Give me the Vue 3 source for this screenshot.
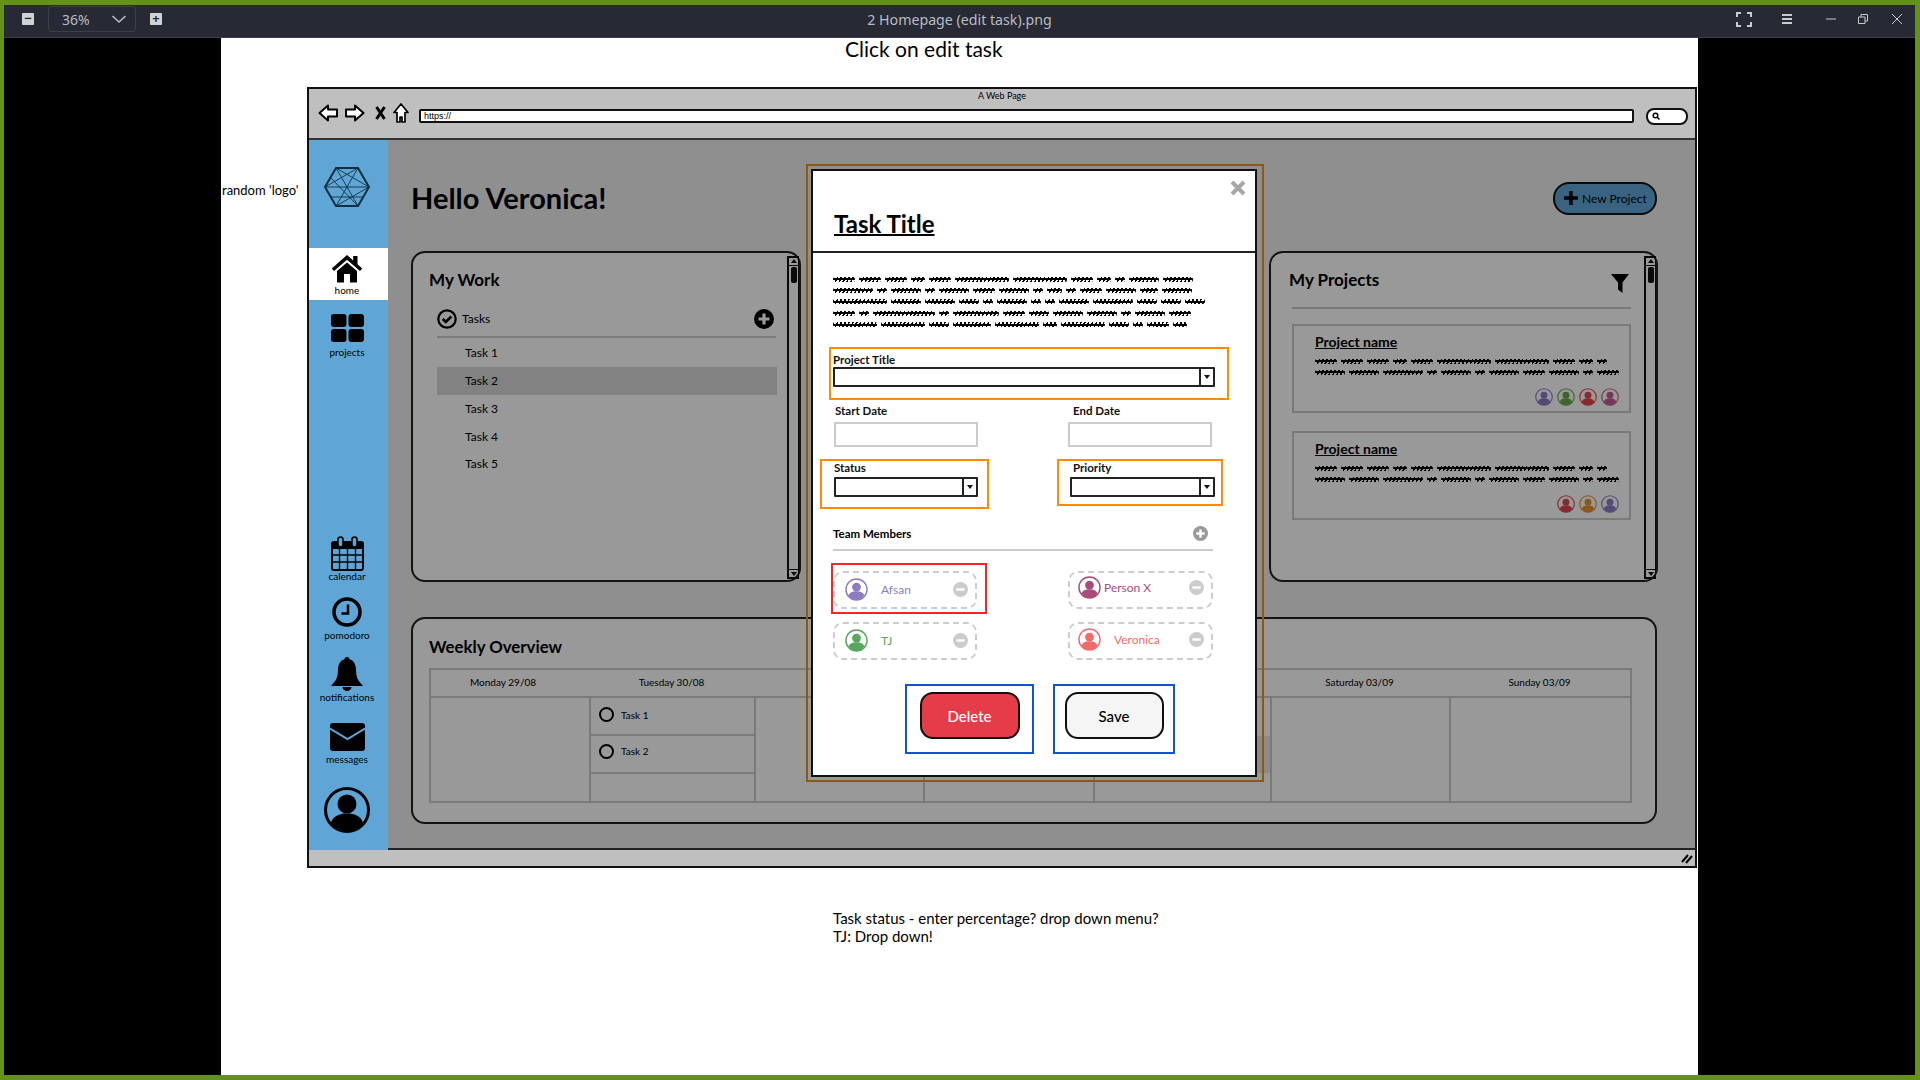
<template>
  <div class="screen">
    <svg class="sprite" aria-hidden="true">
      <symbol id="person" viewBox="0 0 24 24">
        <circle cx="12" cy="12" r="11" fill="none" stroke="currentColor" stroke-width="1.5" />
        <circle cx="12" cy="9.5" r="4.6" fill="currentColor" />
        <path d="M3.8 18.2c1.2-3.4 4-4.4 8.2-4.4s7 1 8.2 4.4A11 11 0 0 1 12 23a11 11 0 0 1-8.2-4.8z" fill="currentColor" />
      </symbol>
      <symbol id="plus-round" viewBox="0 0 20 20">
        <circle cx="10" cy="10" r="10" fill="currentColor" />
        <path d="M10 4.5v11M4.5 10h11" stroke="#fff" stroke-width="3.2" />
      </symbol>
      <symbol id="minus-round" viewBox="0 0 20 20">
        <circle cx="10" cy="10" r="10" fill="currentColor" />
        <path d="M4.5 10h11" stroke="#fff" stroke-width="3.2" />
      </symbol>
    </svg>

    <header class="titlebar">
      <div class="tb-left">
        <span class="tb-btn">−</span>
        <div class="zoom-box">
          <span>36%</span>
          <svg width="16" height="10" viewBox="0 0 16 10"><path d="M1.5 2l6.5 6 6.5-6" fill="none" stroke="#b8bcc4" stroke-width="1.6" /></svg>
        </div>
        <span class="tb-btn">+</span>
      </div>
      <div class="tb-title">2 Homepage (edit task).png</div>
      <div class="tb-right">
        <svg class="ic-full" width="16" height="15" viewBox="0 0 16 15"><path d="M1 5V1h4M11 1h4v4M15 10v4h-4M5 14H1v-4" fill="none" stroke="#c9cbd0" stroke-width="2" /></svg>
        <svg class="ic-menu" width="12" height="12" viewBox="0 0 12 12"><path d="M1 2h10M1 6h10M1 10h10" stroke="#c9cbd0" stroke-width="2" /></svg>
        <svg class="ic-min" width="10" height="10" viewBox="0 0 10 10"><path d="M0 5h10" stroke="#c9cbd0" /></svg>
        <svg class="ic-rest" width="10" height="10" viewBox="0 0 10 10"><path d="M.5 3h6.500v6.500H.5zM3 3V.5h6.500V7H7" fill="none" stroke="#c9cbd0" /></svg>
        <svg class="ic-close" width="10" height="10" viewBox="0 0 10 10"><path d="M0 0l10 10M10 0L0 10" stroke="#c9cbd0" /></svg>
      </div>
    </header>

    <div class="viewer">
      <div class="page">
        <div class="caption">Click on edit task</div>
        <div class="side-note">random 'logo'</div>

        <div class="mock">
          <div class="topbar">
            <div class="web-title">A Web Page</div>
            <div class="url-row">
              <svg class="nav-ic" width="20" height="20" viewBox="0 0 20 20"><path d="M1.500 10L10 2.500V6.500H19V13.500H10V17.500z" fill="#fff" stroke="#000" stroke-width="2" stroke-linejoin="round" /></svg>
              <svg class="nav-ic fwd" width="20" height="20" viewBox="0 0 20 20"><path d="M18.500 10L10 2.500V6.500H1V13.500H10V17.500z" fill="#fff" stroke="#000" stroke-width="2" stroke-linejoin="round" /></svg>
              <svg class="nav-ic cross" width="11" height="14" viewBox="0 0 11 14"><path d="M1.500 1l8 12M9.500 1l-8 12" stroke="#000" stroke-width="3" /></svg>
              <svg class="nav-ic house" width="16" height="20" viewBox="0 0 16 20"><path d="M8 1L1 9.500H4V19H7V14H9V19H12V9.500H15z" fill="#fff" stroke="#000" stroke-width="1.700" stroke-linejoin="round" /></svg>
              <div class="url">https://</div>
              <div class="search-pill">
                <svg width="8" height="8" viewBox="0 0 8 8"><circle cx="3.500" cy="3.500" r="2.300" fill="none" stroke="#000" stroke-width="1.500" /><path d="M5 5l2.500 2.500" stroke="#000" stroke-width="1.500" /></svg>
              </div>
            </div>
          </div>

          <div class="body">
            <aside class="sidebar">
              <svg class="logo" width="46" height="40" viewBox="0 0 46 40">
                <path d="M12 1h22l11 19-11 19H12L1 20z" fill="none" stroke="#10303f" stroke-width="2" />
                <path d="M12 1l22 38M34 1L12 39M1 20l33-19M1 20h44M6 30h34M12 1l33 19M45 20L12 39M6 10l28 29" fill="none" stroke="#10303f" stroke-width=".9" />
              </svg>

              <div class="nav-item active">
                <svg width="32" height="32" viewBox="0 0 32 32">
                  <path d="M16 2L.8 15.500l2.200 2.500L16 6.800 29 18l2.200-2.500L26.500 11.300V3h-4.300v4.500z" />
                  <path d="M16 9.500L6 18v11.500h7V21h6v8.500h7V18z" />
                </svg>
                <span>home</span>
              </div>

              <div class="nav-item projects">
                <svg width="33" height="28" viewBox="0 0 33 28">
                  <rect x="0" y="0" width="15.500" height="13" rx="3" />
                  <rect x="17.500" y="0" width="15.500" height="13" rx="3" />
                  <rect x="0" y="15" width="15.500" height="13" rx="3" />
                  <rect x="17.500" y="15" width="15.500" height="13" rx="3" />
                </svg>
                <span>projects</span>
              </div>

              <div class="nav-item calendar">
                <svg width="33" height="35" viewBox="0 0 33 35">
                  <rect x="1" y="6" width="31" height="28" rx="2" fill="none" stroke="#000" stroke-width="2" />
                  <rect x="1" y="6" width="31" height="7" />
                  <path d="M1 19h31M1 26h31M8.500 13v21M16.500 13v21M24.500 13v21" stroke="#000" stroke-width="1.400" />
                  <rect x="7" y="1" width="5" height="10" rx="2.500" fill="#5fa6d6" stroke="#000" stroke-width="1.500" />
                  <rect x="21" y="1" width="5" height="10" rx="2.500" fill="#5fa6d6" stroke="#000" stroke-width="1.500" />
                </svg>
                <span>calendar</span>
              </div>

              <div class="nav-item pomodoro">
                <svg width="30" height="30" viewBox="0 0 30 30">
                  <circle cx="15" cy="15" r="13" fill="none" stroke="#000" stroke-width="3.500" />
                  <path d="M16 7.500V16.500H9.500" fill="none" stroke="#000" stroke-width="2.500" />
                </svg>
                <span>pomodoro</span>
              </div>

              <div class="nav-item bell">
                <svg width="32" height="34" viewBox="0 0 32 34">
                  <circle cx="16" cy="2.500" r="2.500" />
                  <path d="M16 2c-6 0-9 4.500-9 11 0 6-1.500 10-4.500 13L0 29h32l-2.500-3c-3-3-4.500-7-4.500-13 0-6.500-3-11-9-11z" />
                  <path d="M11.500 30a4.500 4 0 0 0 9 0z" />
                </svg>
                <span>notifications</span>
              </div>

              <div class="nav-item messages">
                <svg width="35" height="28" viewBox="0 0 35 28">
                  <rect width="35" height="28" rx="3" />
                  <path d="M0 5.500L17.500 16 35 5.500" fill="none" stroke="#5fa6d6" stroke-width="2" />
                </svg>
                <span>messages</span>
              </div>

              <svg class="profile" width="46" height="46" viewBox="0 0 46 46">
                <circle cx="23" cy="23" r="21.500" fill="none" stroke="#000" stroke-width="3" />
                <circle cx="23" cy="17" r="9.500" />
                <path d="M7 36c2-7 8-9.500 16-9.500s14 2.500 16 9.500a21 21 0 0 1-16 8 21 21 0 0 1-16-8z" />
              </svg>
            </aside>

            <main class="main">
              <div class="hello-row">
                <h1>Hello Veronica!</h1>
                <div class="new-project">
                  <svg width="14" height="14" viewBox="0 0 14 14"><path d="M7 0v14M0 7h14" stroke="#000" stroke-width="3.400" /></svg>
                  <span>New Project</span>
                </div>
              </div>

              <div class="cards-row">
                <section class="card work-card">
                  <h2>My Work</h2>
                  <div class="tasks-head">
                    <svg width="20" height="20" viewBox="0 0 20 20">
                      <circle cx="10" cy="10" r="8.700" fill="none" stroke="#000" stroke-width="2.200" />
                      <path d="M5.800 10l3 3 5.500-5.500" fill="none" stroke="#000" stroke-width="2.600" />
                    </svg>
                    <span>Tasks</span>
                    <svg class="add" width="20" height="20"><use href="#plus-round" /></svg>
                  </div>
                  <div class="task-list">
                    <div v-for="t in tasks" :key="t" class="task-row" :class="{ selected: t === 'Task 2' }">{{ t }}</div>
                  </div>
                  <div class="scrollbar">
                    <i class="sb-up"></i>
                    <b class="sb-thumb"></b>
                    <i class="sb-down"></i>
                  </div>
                </section>

                <section class="card projects-card">
                  <div class="proj-head">
                    <h2>My Projects</h2>
                    <svg class="filter" width="18" height="19" viewBox="0 0 18 19"><path d="M0 0h18L11.500 8.500V19L7 15.500V8.500z" /></svg>
                  </div>
                  <div v-for="(p, i) in projects" :key="i" class="project">
                    <div class="project-name">Project name</div>
                    <div v-for="(line, j) in p.lines" :key="j" class="scribble">
                      <i v-for="(w, k) in line" :key="k" :style="{ width: w + 'px' }"></i>
                    </div>
                    <div class="project-team">
                      <svg v-for="(c, k) in p.team" :key="k" width="18" height="18" :style="{ color: c }"><use href="#person" /></svg>
                    </div>
                  </div>
                  <div class="scrollbar">
                    <i class="sb-up"></i>
                    <b class="sb-thumb"></b>
                    <i class="sb-down"></i>
                  </div>
                </section>
              </div>

              <section class="card week-card">
                <h2>Weekly Overview</h2>
                <div class="week">
                  <div class="week-head">
                    <div v-for="d in days" :key="d.name" :class="d.cls">{{ d.name }}</div>
                  </div>
                  <div class="week-body">
                    <div v-for="d in days" :key="d.name" class="day">
                      <div v-for="t in d.tasks" :key="t" class="slot">
                        <span class="radio"></span>{{ t }}
                      </div>
                      <div v-if="d.mark" class="slot-mark"></div>
                    </div>
                  </div>
                </div>
              </section>

              <div class="backdrop">
                <div class="modal-ring">
                  <div class="modal">
                    <div class="modal-head">
                      <h3>Task Title</h3>
                      <svg class="close" width="16" height="16" viewBox="0 0 16 16"><path d="M2 2l12 12M14 2L2 14" stroke="#a6a6a6" stroke-width="4" /></svg>
                    </div>

                    <div class="modal-text">
                      <div v-for="(line, j) in modalLines" :key="j" class="scribble">
                        <i v-for="(w, k) in line" :key="k" :style="{ width: w + 'px' }"></i>
                      </div>
                    </div>

                    <div class="hl-orange project-field">
                      <label>Project Title</label>
                      <div class="select"><i></i></div>
                    </div>

                    <div class="dates">
                      <div class="date-field">
                        <label>Start Date</label>
                        <div class="input"></div>
                      </div>
                      <div class="date-field end">
                        <label>End Date</label>
                        <div class="input"></div>
                      </div>
                    </div>

                    <div class="pair">
                      <div class="hl-orange status-field">
                        <label>Status</label>
                        <div class="select"><i></i></div>
                      </div>
                      <div class="hl-orange priority-field">
                        <label>Priority</label>
                        <div class="select"><i></i></div>
                      </div>
                    </div>

                    <div class="team-head">
                      <span>Team Members</span>
                      <svg width="15" height="15"><use href="#plus-round" /></svg>
                    </div>

                    <div class="members">
                      <div v-for="m in members" :key="m.name" :class="m.wrap">
                        <div class="chip" :class="m.cls" :style="{ color: m.color }">
                          <svg class="chip-av" width="23" height="23"><use href="#person" /></svg>
                          <span>{{ m.name }}</span>
                          <svg class="chip-rm" width="15" height="15"><use href="#minus-round" /></svg>
                        </div>
                      </div>
                    </div>

                    <div class="actions">
                      <div class="hl-blue delete-box"><button class="btn-delete">Delete</button></div>
                      <div class="hl-blue save-box"><button class="btn-save">Save</button></div>
                    </div>
                  </div>
                </div>
              </div>
            </main>
          </div>

          <div class="statusbar">
            <svg width="12" height="12" viewBox="0 0 12 12"><path d="M1 10L7 3M5 11l6-7" stroke="#000" stroke-width="2" /></svg>
          </div>
        </div>

        <div class="notes">
          <div>Task status - enter percentage? drop down menu?</div>
          <div>TJ: Drop down!</div>
        </div>
      </div>
    </div>
  </div>
</template>

<script setup>
const tasks = ['Task 1', 'Task 2', 'Task 3', 'Task 4', 'Task 5']

const projectLines = [
  [22, 22, 22, 14, 22, 54, 54, 22, 14, 10],
  [30, 30, 40, 10, 30, 10, 30, 22, 30, 10, 22]
]

const projects = [
  { lines: projectLines, team: ['#8e7cc3', '#6aa84f', '#e0464f', '#c2608f'] },
  { lines: projectLines, team: ['#e0464f', '#e69138', '#8e7cc3'] }
]

const modalLines = [
  [22, 22, 22, 14, 22, 54, 54, 22, 14, 10, 30, 30],
  [40, 10, 30, 10, 30, 22, 30, 10, 15, 10, 22, 30, 18, 30],
  [54, 30, 30, 20, 10, 30, 10, 10, 30, 40, 20, 20, 20],
  [22, 10, 62, 10, 46, 22, 20, 30, 30, 10, 30, 22],
  [44, 44, 20, 38, 44, 14, 44, 20, 10, 22, 14]
]

const days = [
  { name: 'Monday 29/08', cls: 'shift-left', tasks: [] },
  { name: 'Tuesday 30/08', tasks: ['Task 1', 'Task 2'] },
  { name: 'Wednesday 31/08', cls: 'shift-right', tasks: [] },
  { name: 'Thursday 01/09', tasks: [] },
  { name: 'Friday 02/09', tasks: [], mark: true },
  { name: 'Saturday 03/09', tasks: [] },
  { name: 'Sunday 03/09', tasks: [] }
]

const members = [
  { name: 'Afsan', color: '#8e7cc3', wrap: 'hl-red' },
  { name: 'Person X', color: '#a64d79', cls: 'tight', wrap: 'cell-right' },
  { name: 'TJ', color: '#57a85c', wrap: 'cell-left' },
  { name: 'Veronica', color: '#f06a6a', cls: 'wide', wrap: 'cell-plain' }
]
</script>

<style>
html, body {
  margin: 0;
  background: #000;
}
</style>

<style scoped>
.screen {
  width: 1920px;
  height: 1080px;
  box-sizing: border-box;
  padding: 5px 5px 5px 4px;
  background: #64911a;
  display: flex;
  flex-direction: column;
  overflow: hidden;
  font-family: Lato, "Open Sans", sans-serif;
  color: #000;
}
.sprite {
  position: absolute;
  width: 0;
  height: 0;
}

.titlebar {
  height: 33px;
  flex: none;
  box-sizing: border-box;
  padding-bottom: 4px;
  border-bottom: 1px solid #3c3f48;
  background: #272a34;
  display: flex;
  align-items: center;
  position: relative;
  font-family: "Noto Sans", sans-serif;
  color: #b8bcc4;
}
.tb-left {
  display: flex;
  align-items: center;
  padding-left: 18px;
}
.tb-btn {
  width: 12px;
  height: 12px;
  border-radius: 1px;
  background: #d0d2d6;
  color: #272a34;
  font-size: 13px;
  font-weight: 700;
  line-height: 11px;
  text-align: center;
}
.zoom-box {
  width: 88px;
  height: 26px;
  box-sizing: border-box;
  margin: 0 14px 0 14px;
  padding: 0 8px 0 13px;
  border: 1px solid #3c3f48;
  border-radius: 3px;
  display: flex;
  align-items: center;
  justify-content: space-between;
  font-size: 14px;
}
.tb-title {
  position: absolute;
  left: 0;
  right: 0;
  text-align: center;
  font-size: 14.200px;
}
.tb-right {
  margin-left: auto;
  display: flex;
  align-items: center;
  padding-right: 13px;
}
.ic-menu { margin-left: 29px; }
.ic-min { margin-left: 33px; }
.ic-rest { margin-left: 22px; }
.ic-close { margin-left: 24px; }

.viewer {
  flex: 1;
  background: #000;
  display: flex;
  justify-content: center;
  min-height: 0;
}
.page {
  width: 1477px;
  background: #fff;
  position: relative;
}
.caption {
  padding-left: 624px;
  font-size: 21px;
  line-height: 22px;
}
.side-note {
  position: absolute;
  left: 1px;
  top: 144px;
  font-size: 13px;
  line-height: 16px;
}
.notes {
  margin: 41px 0 0 612px;
  font-size: 15px;
  line-height: 18px;
}

.mock {
  width: 1390px;
  height: 781px;
  box-sizing: border-box;
  margin: 27px 0 0 86px;
  border: 2px solid #111;
  display: flex;
  flex-direction: column;
}
.topbar {
  height: 51px;
  flex: none;
  box-sizing: border-box;
  background: #bfbfbf;
  border-bottom: 2px solid #333;
}
.web-title {
  height: 14px;
  font-size: 9px;
  line-height: 14px;
  text-align: center;
}
.url-row {
  display: flex;
  align-items: center;
  height: 20px;
  padding: 0 7px 0 9px;
}
.nav-ic { flex: none; }
.nav-ic.fwd { margin-left: 7px; }
.nav-ic.cross { margin-left: 10px; }
.nav-ic.house { margin-left: 7px; }
.url {
  flex: 1;
  height: 14px;
  box-sizing: border-box;
  margin: 6px 0 0 10px;
  padding-left: 3px;
  background: #fff;
  border: 2px solid #111;
  border-radius: 2px;
  font-family: "Liberation Sans", sans-serif;
  font-size: 9px;
  line-height: 10px;
}
.search-pill {
  width: 42px;
  height: 17px;
  box-sizing: border-box;
  margin: 6px 0 0 12px;
  padding-left: 4px;
  background: #fff;
  border: 2px solid #111;
  border-radius: 8px;
  display: flex;
  align-items: center;
}

.body {
  height: 710px;
  flex: none;
  display: flex;
  min-height: 0;
}
.sidebar {
  width: 79px;
  flex: none;
  background: #5fa6d6;
  display: flex;
  flex-direction: column;
  align-items: center;
  padding-top: 27px;
  box-sizing: border-box;
}
.logo { flex: none; margin-right: 3px; }
.nav-item {
  display: flex;
  flex-direction: column;
  align-items: center;
  width: 100%;
  flex: none;
  box-sizing: border-box;
  padding-right: 3px;
}
.nav-item svg { display: block; flex: none; }
.nav-item span {
  font-size: 10px;
  line-height: 12px;
  height: 12px;
}
.nav-item.active {
  margin-top: 41px;
  height: 52px;
  padding-top: 5px;
  background: #fff;
}
.nav-item.active span { margin-top: -1px; }
.nav-item.projects { margin-top: 14px; }
.nav-item.projects span { margin-top: 4px; }
.nav-item.calendar { margin-top: 178px; }
.nav-item.calendar span { margin-top: -1px; }
.nav-item.pomodoro { margin-top: 15px; }
.nav-item.pomodoro span { margin-top: 2px; }
.nav-item.bell { margin-top: 16px; }
.nav-item.messages { margin-top: 20px; }
.nav-item.messages span { margin-top: 2px; }
.profile { margin: 22px 3px 0 0; flex: none; }

.main {
  flex: 1;
  position: relative;
  box-sizing: border-box;
  padding: 42px 37px 0 23px;
  background: #eeeeee;
  border-bottom: 2px solid #222;
}
.hello-row {
  height: 32px;
  display: flex;
  justify-content: space-between;
  align-items: center;
}
h1 {
  margin: 0;
  font-size: 29px;
  font-weight: 700;
  line-height: 32px;
}
.new-project {
  width: 104px;
  height: 33px;
  box-sizing: border-box;
  margin-right: 1px;
  padding-left: 9px;
  display: flex;
  align-items: center;
  gap: 4px;
  background: #5fa6d6;
  border: 2px solid #111;
  border-radius: 16px;
  font-size: 12px;
  white-space: nowrap;
}
.cards-row {
  margin-top: 37px;
  display: flex;
  justify-content: space-between;
}
.card {
  position: relative;
  box-sizing: border-box;
  background: #fff;
  border: 2px solid #222;
  border-radius: 14px;
}
.card h2 {
  margin: 0;
  font-size: 17px;
  font-weight: 700;
  line-height: 20px;
}
.work-card {
  width: 390px;
  height: 331px;
  padding: 17px 0 0 16px;
}
.projects-card {
  width: 389px;
  height: 331px;
  padding: 17px 0 0 21px;
}
.tasks-head {
  width: 339px;
  height: 30px;
  box-sizing: border-box;
  margin: 18px 0 0 8px;
  padding-bottom: 7px;
  border-bottom: 2px solid #ccc;
  display: flex;
  align-items: center;
  font-size: 12px;
}
.tasks-head span { margin-left: 5px; }
.tasks-head .add { margin-left: auto; margin-right: 2px; }
.task-list {
  margin: 1px 0 0 8px;
  width: 340px;
}
.task-row {
  height: 28px;
  padding-left: 28px;
  font-size: 12px;
  line-height: 28px;
}
.task-row:last-child { height: 26px; line-height: 26px; }
.task-row.selected { background: #d9d9d9; }

.scrollbar {
  position: absolute;
  top: 3px;
  right: 0;
  bottom: 1px;
  width: 12px;
  box-sizing: border-box;
  border: 2px solid #111;
  border-right-width: 1px;
  display: flex;
  flex-direction: column;
  align-items: center;
}
.sb-up,
.sb-down {
  width: 100%;
  height: 7px;
  flex: none;
  position: relative;
}
.sb-up { border-bottom: 1px solid #111; }
.sb-down { margin-top: auto; border-top: 1px solid #111; }
.sb-up::after,
.sb-down::after {
  content: "";
  position: absolute;
  left: 2px;
  border-left: 3px solid transparent;
  border-right: 3px solid transparent;
}
.sb-up::after { top: 1px; border-bottom: 4px solid #111; }
.sb-down::after { top: 2px; border-top: 4px solid #111; }
.sb-thumb {
  width: 6px;
  height: 16px;
  margin-top: 1px;
  background: #111;
  border-radius: 2px;
}

.proj-head {
  width: 339px;
  height: 39px;
  box-sizing: border-box;
  padding-right: 2px;
  border-bottom: 2px solid #ccc;
  display: flex;
  justify-content: space-between;
  align-items: flex-start;
}
.proj-head h2 { margin-left: -3px; }
.filter { margin-top: 4px; }
.project {
  width: 339px;
  height: 89px;
  box-sizing: border-box;
  margin-top: 15px;
  padding: 6px 10px 0 21px;
  border: 2px solid #ccc;
}
.project + .project { margin-top: 18px; }
.project-name {
  font-size: 14px;
  font-weight: 700;
  line-height: 20px;
  text-decoration: underline;
}
.project .scribble { margin-top: 7px; }
.project-team {
  margin-top: 14px;
  display: flex;
  justify-content: flex-end;
  gap: 4px;
}
.scribble {
  display: flex;
  gap: 4px;
  height: 4px;
}
.scribble i {
  height: 5px;
  margin-top: -.5px;
  border-radius: 2px;
  background:
    linear-gradient(#000, #000) center / 100% 2px no-repeat,
    repeating-linear-gradient(115deg, #000 0 1.500px, transparent 1.500px 3.500px);
}

.week-card {
  width: 1246px;
  height: 207px;
  margin-top: 35px;
  padding: 18px 0 0 16px;
}
.card.week-card h2 { font-size: 16.800px; }
.week {
  width: 1203px;
  height: 135px;
  box-sizing: border-box;
  margin-top: 11px;
  border: 2px solid #ccc;
}
.week-head,
.week-body {
  display: grid;
  grid-template-columns: 158px 165px 169px 170px 177px 179px 1fr;
}
.week-head {
  height: 28px;
  box-sizing: border-box;
  border-bottom: 2px solid #ccc;
  font-size: 10px;
  line-height: 24px;
  text-align: center;
}
.shift-left { padding-right: 14px; }
.shift-right { padding-left: 30px; }
.week-body { height: 103px; }
.day {
  border-left: 2px solid #ccc;
  font-size: 10px;
}
.day:first-child { border-left: none; }
.slot {
  height: 38px;
  box-sizing: border-box;
  padding: 0 0 3px 8px;
  border-bottom: 2px solid #ccc;
  display: flex;
  align-items: center;
  gap: 7px;
}
.slot:nth-child(2) { padding-bottom: 6px; }
.radio {
  width: 15px;
  height: 15px;
  box-sizing: border-box;
  border: 2px solid #000;
  border-radius: 50%;
}
.slot-mark {
  height: 37px;
  margin-top: 38px;
  background: #e6e6e6;
}

.backdrop {
  position: absolute;
  inset: 0;
  background: rgba(0, 0, 0, 0.4);
}
.modal-ring {
  position: absolute;
  left: 418px;
  top: 24px;
  width: 458px;
  height: 618px;
  box-sizing: border-box;
  padding: 3px 5px 3px 3px;
  border: 2px solid #8a5a10;
}
.modal {
  height: 100%;
  box-sizing: border-box;
  padding-left: 1px;
  background: #fff;
  border: 2px solid #111;
  position: relative;
}
.modal-head {
  height: 82px;
  box-sizing: border-box;
  margin-left: -1px;
  padding: 38px 0 0 21px;
  border-bottom: 2px solid #222;
}
h3 {
  margin: 0;
  font-size: 24px;
  font-weight: 700;
  line-height: 30px;
  text-decoration: underline;
  text-decoration-thickness: 2px;
}
.close {
  position: absolute;
  right: 9px;
  top: 9px;
}
.modal-text {
  margin: 24px 0 0 19px;
  display: flex;
  flex-direction: column;
  gap: 7.400px;
}
label {
  display: block;
  height: 14px;
  font-size: 11.500px;
  font-weight: 700;
  line-height: 14px;
  color: #111;
}
.hl-orange { border: 2px solid #ff8c00; box-sizing: border-box; }
.hl-red { border: 2px solid #f22; box-sizing: border-box; width: 156px; height: 51px; padding-top: 6px; }
.hl-blue { border: 2px solid #1155cc; box-sizing: border-box; }
.select {
  height: 20px;
  box-sizing: border-box;
  background: #fff;
  border: 2px solid #222;
  border-radius: 1px;
  position: relative;
}
.select i {
  position: absolute;
  top: 0;
  right: 0;
  bottom: 0;
  width: 12px;
  border-left: 2px solid #222;
}
.select i::after {
  content: "";
  position: absolute;
  left: 3px;
  top: 6px;
  border-left: 3px solid transparent;
  border-right: 3px solid transparent;
  border-top: 4px solid #111;
}
.project-field {
  width: 400px;
  height: 53px;
  margin: 20px 0 0 15px;
  padding: 4px 0 0 2px;
}
.project-field .select { width: 382px; }
.dates {
  margin: 4px 0 0 20px;
  display: flex;
  gap: 90px;
}
.date-field { width: 144px; }
.date-field label { padding-left: 1px; }
.date-field.end label { padding-left: 5px; }
.input {
  height: 25px;
  box-sizing: border-box;
  margin-top: 4px;
  border: 2px solid #ccc;
}
.pair {
  margin: 12px 0 0 6px;
  display: flex;
  align-items: flex-start;
}
.status-field {
  width: 169px;
  height: 50px;
  padding: 0 0 0 12px;
}
.status-field label { margin-bottom: 2px; }
.status-field .select { width: 144px; }
.priority-field {
  width: 166px;
  height: 47px;
  margin-left: 68px;
  padding: 0 0 0 11px;
}
.priority-field label { margin-bottom: 2px; padding-left: 3px; }
.priority-field .select { width: 145px; }
.team-head {
  width: 380px;
  height: 25px;
  box-sizing: border-box;
  margin: 17px 0 0 19px;
  padding: 0 5px 7px 0;
  border-bottom: 2px solid #ccc;
  display: flex;
  justify-content: space-between;
  align-items: center;
  font-size: 11.500px;
  font-weight: 700;
}
.team-head svg { color: #999; }
.members {
  margin: 12px 0 0 17px;
  display: grid;
  grid-template-columns: 237px 1fr;
  row-gap: 8px;
}
.cell-right { padding-top: 8px; }
.cell-left { padding-left: 2px; }
.chip {
  width: 144px;
  height: 38px;
  box-sizing: border-box;
  padding: 0 7px 0 10px;
  border: 2px dashed #ccc;
  border-radius: 10px;
  display: flex;
  align-items: center;
  font-size: 12px;
}
.chip-av { flex: none; }
.chip span { margin-left: 13px; white-space: nowrap; }
.chip-rm { margin-left: auto; color: #ccc; flex: none; }
.chip.tight { padding-left: 8px; padding-bottom: 4px; width: 145px; }
.chip.tight span { margin-left: 3px; }
.chip.wide { padding-left: 8px; padding-bottom: 2px; width: 145px; }
.chip.wide span { margin-left: 13px; }
.actions {
  margin: 24px 0 0 91px;
  display: flex;
  gap: 19px;
}
.actions .hl-blue {
  height: 70px;
  padding-bottom: 6px;
  display: flex;
  justify-content: center;
  align-items: center;
}
.delete-box { width: 129px; }
.save-box { width: 122px; }
button {
  height: 47px;
  border: 2px solid #111;
  border-radius: 13px;
  font-family: inherit;
  font-size: 15px;
  font-weight: 500;
  padding: 0;
}
.btn-delete {
  width: 100px;
  background: #e63b49;
  color: #fff;
}
.btn-save {
  width: 99px;
  background: #f5f5f5;
  color: #000;
}

.statusbar {
  flex: 1;
  background: #bfbfbf;
  display: flex;
  justify-content: flex-end;
  align-items: center;
  padding-right: 2px;
}
</style>
